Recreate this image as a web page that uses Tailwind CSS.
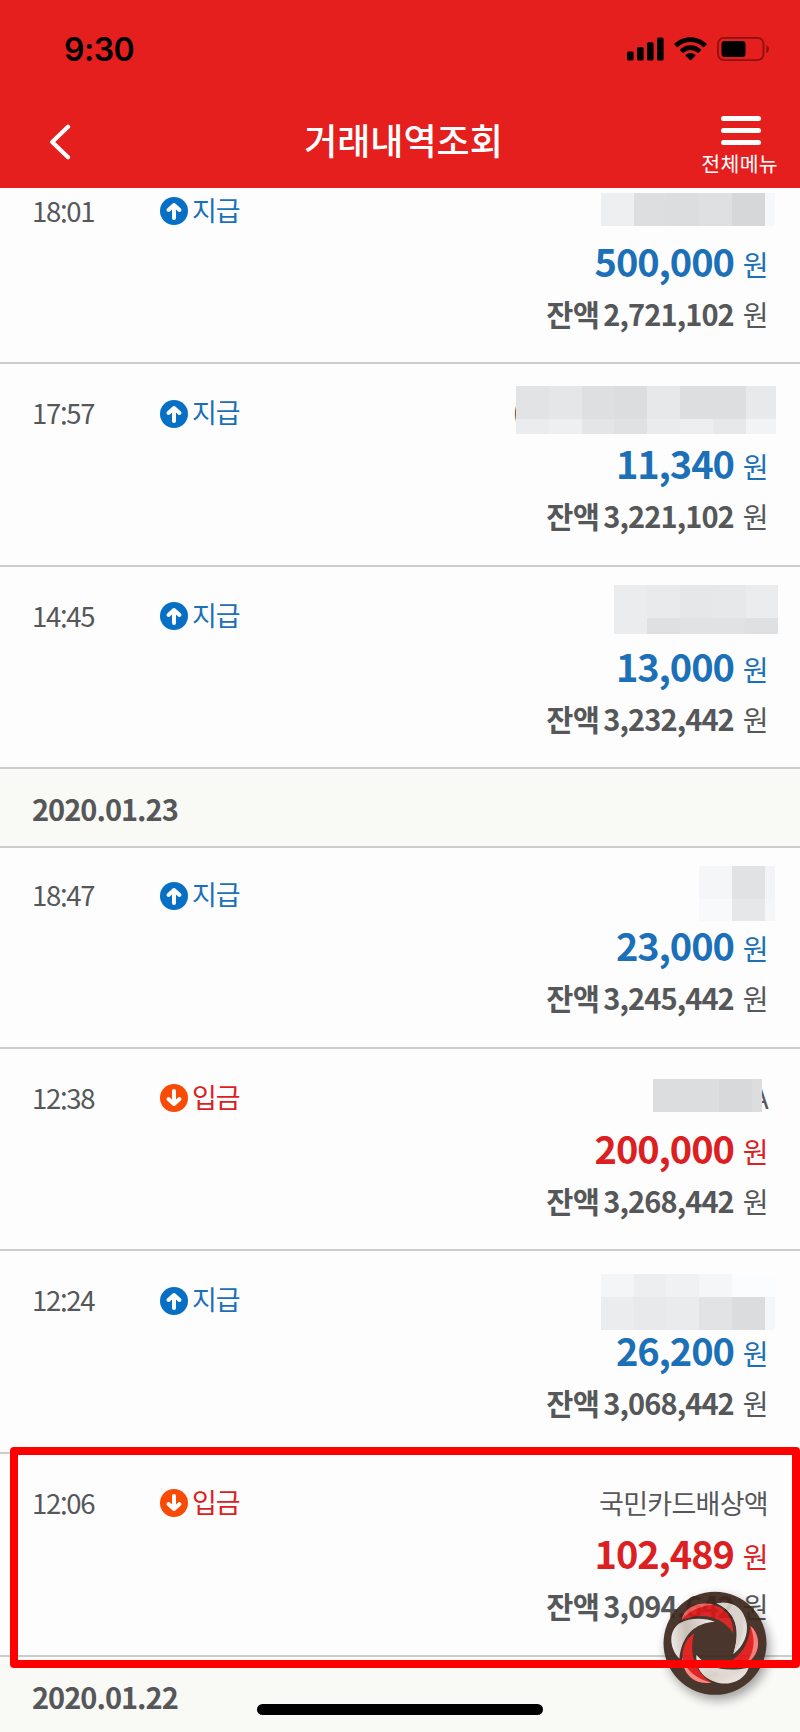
<!DOCTYPE html>
<html lang="ko">

<head>
  <meta charset="UTF-8">
  <meta name="viewport" content="width=device-width, initial-scale=1.0">
  <title>거래내역조회</title>
  <script src="https://cdn.jsdelivr.net/npm/@tailwindcss/browser@4"></script>
</head>

<body class="bg-[#fdfdfe]">
  <div class="relative w-[800px] h-[1732px] overflow-hidden flex flex-col font-['Noto_Sans_CJK_KR',sans-serif] text-[#555759]">
    <header class="relative z-10 h-[187.5px] shrink-0 bg-[#e51e1e] text-white">
      <!-- status bar -->
      <div class="h-[98px] pl-16 pr-[30px] flex items-center justify-between text-black">
        <span class="mt-[2px] font-['Inter',sans-serif] font-semibold text-[32px] leading-10 tracking-[-0.5px]">9:30</span>
        <div class="flex items-center gap-x-[10px]">
          <svg class="w-[37px] h-6" viewBox="0 0 37 24">
            <rect x="0" y="14.5" width="6.6" height="9" rx="1.6" />
            <rect x="10" y="10" width="6.6" height="13.5" rx="1.6" />
            <rect x="20" y="5.3" width="6.6" height="18.2" rx="1.6" />
            <rect x="30" y="0.5" width="6.6" height="23" rx="1.6" />
          </svg>
          <svg class="w-[33px] h-6" viewBox="0 0 33 24">
            <path d="M16.5 0.2C22.6 0.2 28.2 2.6 32.4 6.5Q33 7.1 32.4 7.7L30.3 9.9Q29.7 10.4 29.1 9.9A18.5 18.5 0 0 0 3.9 9.9Q3.3 10.4 2.7 9.9L0.6 7.7Q0 7.1 0.6 6.5C4.8 2.6 10.4 0.2 16.5 0.2Z" />
            <path d="M16.5 8.2Q22.6 8.4 26.9 12.3Q27.4 12.9 26.9 13.4L24.6 15.7Q24.1 16.1 23.5 15.7A10.8 10.8 0 0 0 9.5 15.7Q8.9 16.1 8.4 15.7L6.1 13.4Q5.6 12.9 6.1 12.3Q10.4 8.4 16.5 8.2Z" />
            <path d="M16.5 16.1Q19.2 16.1 21.2 17.8Q21.7 18.4 21.2 19L17.1 23.1Q16.5 23.6 15.9 23.1L11.8 19Q11.3 18.4 11.8 17.8Q13.8 16.1 16.5 16.1Z" />
          </svg>
          <svg class="w-[53px] h-6" viewBox="0 0 53 24">
            <rect x="1" y="0.9" width="45.5" height="22.2" rx="6" fill="none" stroke="#8f1010" stroke-width="1.8" />
            <rect x="4.5" y="4" width="24" height="16" rx="3.2" />
            <path d="M49.3 8v8Q52 15 52 12T49.3 8Z" fill="#8f1010" />
          </svg>
        </div>
      </div>
      <div class="h-[89px] pl-[49px] pr-[22px] grid grid-cols-[80px_1fr_80px]">
        <svg class="w-[22px] h-9 mt-[26px]" viewBox="0 0 22 36">
          <path d="M19 2.8L3.2 18L19 33.2" fill="none" stroke="#fff" stroke-width="4.2" stroke-linecap="round" stroke-linejoin="round" />
        </svg>
        <h1 class="h-[84px] pr-[24px] flex items-center justify-center font-medium text-[36px] leading-[84px]"><span class="-mt-[2px] ml-[4px]">거래내역조회</span></h1>
        <div class="flex flex-col items-end pt-[17.5px]">
          <div class="w-10 mr-[17px] flex flex-col gap-y-[7px]">
            <div class="h-[5px] rounded-full bg-white"></div>
            <div class="h-[5px] rounded-full bg-white"></div>
            <div class="h-[5px] rounded-full bg-white"></div>
          </div>
          <div class="mt-[3px] text-[20.5px] leading-[30px] tracking-[0.3px] whitespace-nowrap">전체메뉴</div>
        </div>
      </div>
    </header>

    <main id="list" class="-mt-[26px] shrink-0"></main>

    <!-- floating menu -->
    <svg class="absolute left-[640px] top-[1570px] w-[160px] h-[160px]" viewBox="0 0 480 480">
      <defs>
        <linearGradient id="silver" x1="0" y1="0" x2="1" y2="1">
          <stop offset="0" stop-color="#f3efeb" />
          <stop offset="0.5" stop-color="#d6cec7" />
          <stop offset="1" stop-color="#f1ede9" />
        </linearGradient>
        <linearGradient id="silverLeft" x1="0" y1="0.4" x2="1" y2="0.3">
          <stop offset="0" stop-color="#ece7e2" />
          <stop offset="0.35" stop-color="#c4b9b0" />
          <stop offset="1" stop-color="#f1ede9" />
        </linearGradient>
        <filter id="shadow" x="-30%" y="-30%" width="160%" height="160%">
          <feDropShadow dx="9" dy="15" stdDeviation="16" flood-color="#000" flood-opacity="0.4" />
        </filter>
      </defs>
      <g opacity="0.92">
        <circle cx="225" cy="220" r="154.5" fill="#3a281b" filter="url(#shadow)" />
        <path d="M125 150C132 110 180 92 222 104C264 118 280 150 280 190C250 145 195 122 125 150Z" fill="#d81616" />
        <path d="M125 150C132 110 180 92 222 104C185 106 148 120 125 150Z" fill="#ee5a54" />
        <path d="M230 100C275 92 310 110 320 160C325 195 310 230 280 252C300 190 295 130 230 100Z" fill="url(#silver)" />
        <path d="M230 100C275 92 302 115 308 150C312 185 302 220 280 252C300 190 295 130 230 100Z" fill="#d8d0c9" />
        <path d="M331 167C356 188 361 225 346 253C326 288 284 298 230 291C290 276 330 228 331 167Z" fill="#e01212" />
        <path d="M331 167C356 188 361 225 346 253C340 264 330 274 318 281C350 235 342 200 331 167Z" fill="#f4766e" />
        <path d="M169 255C205 298 260 306 326 293C315 326 280 345 240 340C190 328 168 300 169 255Z" fill="url(#silver)" />
        <path d="M169 255C205 298 260 306 316 300C285 322 205 322 169 255Z" fill="#ded7d1" />
        <path d="M163 189C146 245 162 305 214 338C165 345 130 315 127 270C126 230 140 205 163 189Z" fill="#df1414" />
        <path d="M127 262C140 305 168 326 214 338C165 345 128 315 127 262Z" fill="#f4827a" />
        <path d="M225 155C165 158 125 195 118 266C88 235 84 185 118 160C150 142 195 144 225 155Z" fill="url(#silverLeft)" />
      </g>
    </svg>

    <!-- highlighted entry -->
    <div class="absolute left-[10px] top-[1447px] w-[790px] h-[221px] border-8 border-[#fe0000] rounded"></div>
    <!-- home indicator -->
    <div class="absolute left-[257px] top-[1704px] w-[286px] h-[11px] rounded-full bg-black"></div>
  </div>

  <script>
    // mask: [x, y, width, height, color], measured from the top left of the entry
    const rows = [
      {
        time: '18:01', type: 'out', amount: '500,000', balance: '2,721,102',
        mask: [[601, 31, 33, 33, '#eeeff1'], [634, 31, 32, 33, '#dddee0'], [666, 31, 33, 33, '#dcdddf'], [699, 31, 33, 33, '#dfe0e2'], [732, 31, 32.5, 33, '#d6d7d9'], [764.5, 31, 10.5, 33, '#f6f7f9']]
      },
      {
        time: '17:57', type: 'out', amount: '11,340', balance: '3,221,102', name: '(', nameClass: 'mr-[246px]',
        mask: [
          [516, 21.5, 33.5, 33, '#e2e3e5'], [549, 21.5, 33, 33, '#e5e6e8'], [582, 21.5, 33, 33, '#dedfe1'], [614, 21.5, 34, 33, '#dcdddf'], [647, 21.5, 33, 33, '#e7e8ea'], [680, 21.5, 66, 33, '#dddee0'], [746, 21.5, 30, 33, '#e8e9eb'],
          [516, 54.5, 33.5, 15, '#ebecee'], [549, 54.5, 33, 15, '#eeeff1'], [582, 54.5, 33, 15, '#e4e5e7'], [614, 54.5, 34, 15, '#e0e1e3'], [647, 54.5, 33, 15, '#eaebed'], [680, 54.5, 33, 15, '#edeef0'], [713, 54.5, 33, 15, '#e7e8ea'], [746, 54.5, 30, 15, '#f2f3f5']
        ]
      },
      {
        time: '14:45', type: 'out', amount: '13,000', balance: '3,232,442',
        mask: [
          [614, 18, 33.5, 49, '#ebecee'], [647, 18, 33, 33, '#e9eaec'], [680, 18, 33, 33, '#e6e7e9'], [713, 18, 33, 33, '#e7e8ea'], [746, 18, 32, 33, '#ebecee'],
          [647, 51, 33, 16, '#dfe0e2'], [680, 51, 66, 16, '#e1e2e4'], [746, 51, 32, 16, '#dfe0e2']
        ]
      },
      { date: '2020.01.23' },
      {
        time: '18:47', type: 'out', amount: '23,000', balance: '3,245,442', first: true,
        mask: [[699, 18, 33, 33, '#f5f6f8'], [732, 18, 32.5, 33, '#e1e2e4'], [764.5, 18, 10.5, 33, '#f3f4f6'], [699, 51, 33, 22, '#f8f9fb'], [732, 51, 32.5, 22, '#e6e7e9'], [764.5, 51, 10.5, 22, '#f5f6f8']]
      },
      {
        time: '12:38', type: 'in', amount: '200,000', balance: '3,268,442', name: 'A',
        mask: [[653, 30, 66, 33, '#dcdddf'], [719, 30, 33, 33, '#d8d9db'], [752, 30, 10, 33, '#dcdddf']]
      },
      {
        time: '12:24', type: 'out', amount: '26,200', balance: '3,068,442',
        mask: [
          [601, 22.5, 33, 24, '#f4f5f7'], [634, 22.5, 32, 24, '#edeef0'], [666, 22.5, 33, 24, '#f0f1f3'], [699, 22.5, 33, 24, '#f5f6f8'], [732, 22.5, 43, 24, '#fbfcfe'],
          [601, 46, 33, 33, '#ebecee'], [634, 46, 32, 33, '#e8e9eb'], [666, 46, 33, 33, '#eaebed'], [699, 46, 33, 33, '#e2e3e5'], [732, 46, 32.5, 33, '#dbdcde'], [764.5, 46, 10.5, 33, '#f5f6f8']
        ]
      },
      { time: '12:06', type: 'in', amount: '102,489', balance: '3,094,642', name: '국민카드배상액' },
      { date: '2020.01.22' },
    ]
    const types = {
      out: { label: '지급', text: 'text-[#1b70b7]', fill: '#0870c4', arrow: 'M14 21V9M8.5 13L14 8L19.5 13' },
      in: { label: '입금', text: 'text-[#dc2022]', fill: '#f84b05', arrow: 'M14 7V19M8.5 15L14 20L19.5 15' },
    }
    document.getElementById('list').innerHTML = rows.map(row => {
      if (row.date) {
        return `<div class="h-[79px] pl-8 border-b-2 border-[#cbcccd] bg-[#f9f9f6] font-bold text-[29px] leading-[78px] tracking-[-1px]">${row.date}</div>`
      }
      const type = types[row.type]
      // the font lifts a colon between digits, so bring it back down to the baseline
      const time = row.time.replace(':', '<span class="relative top-[3px]">:</span>')
      return `
      <section class="relative flex items-start pl-8 pr-[33px] border-b-2 border-[#cbcccd] ${row.first ? 'h-[200.5px] pt-5' : 'h-[202.6px] pt-[22px]'}">
        <div class="w-32 text-[27.5px] leading-[52px] tracking-[-1.3px]">${time}</div>
        <div class="flex items-center gap-x-1 ${type.text}">
          <svg class="w-7 h-7 mt-[3px]" viewBox="0 0 28 28">
            <circle cx="14" cy="14" r="14" fill="${type.fill}" />
            <path d="${type.arrow}" fill="none" stroke="#fff" stroke-width="4" stroke-linecap="round" stroke-linejoin="round" />
          </svg>
          <span class="text-[27px] leading-[52px] tracking-[-1px]">${type.label}</span>
        </div>
        <div class="flex-1 flex flex-col items-end">
          <div class="h-[52px] pt-px -mr-px text-[27px] leading-[52px] tracking-[-0.7px] ${row.nameClass || ''}">${row.name || ''}</div>
          <div class="h-12 flex items-start gap-x-[9px] ${type.text}">
            <span class="mt-px font-bold text-[38px] leading-[48px] tracking-[-1.1px]">${row.amount}</span>
            <span class="mt-1 text-[28px] leading-[48px] tracking-[-1.6px]">원</span>
          </div>
          <div class="mt-[3px] h-[52px] flex items-baseline">
            <span class="mr-[4px] font-bold text-[29.5px] leading-[52px] tracking-[-0.6px]">잔액</span>
            <span class="mr-[9px] font-bold text-[29px] leading-[52px] tracking-[-0.9px]">${row.balance}</span>
            <span class="text-[28px] leading-[52px] tracking-[-1.6px]">원</span>
          </div>
        </div>
        ${row.mask ? `<svg class="absolute left-0 top-0 w-[800px] h-[90px]" viewBox="0 0 800 90" shape-rendering="crispEdges">
          ${row.mask.map(([x, y, w, h, color]) => `<rect x="${x}" y="${y}" width="${w}" height="${h}" fill="${color}" />`).join('')}
        </svg>` : ''}
      </section>`
    }).join('')
  </script>
</body>

</html>
